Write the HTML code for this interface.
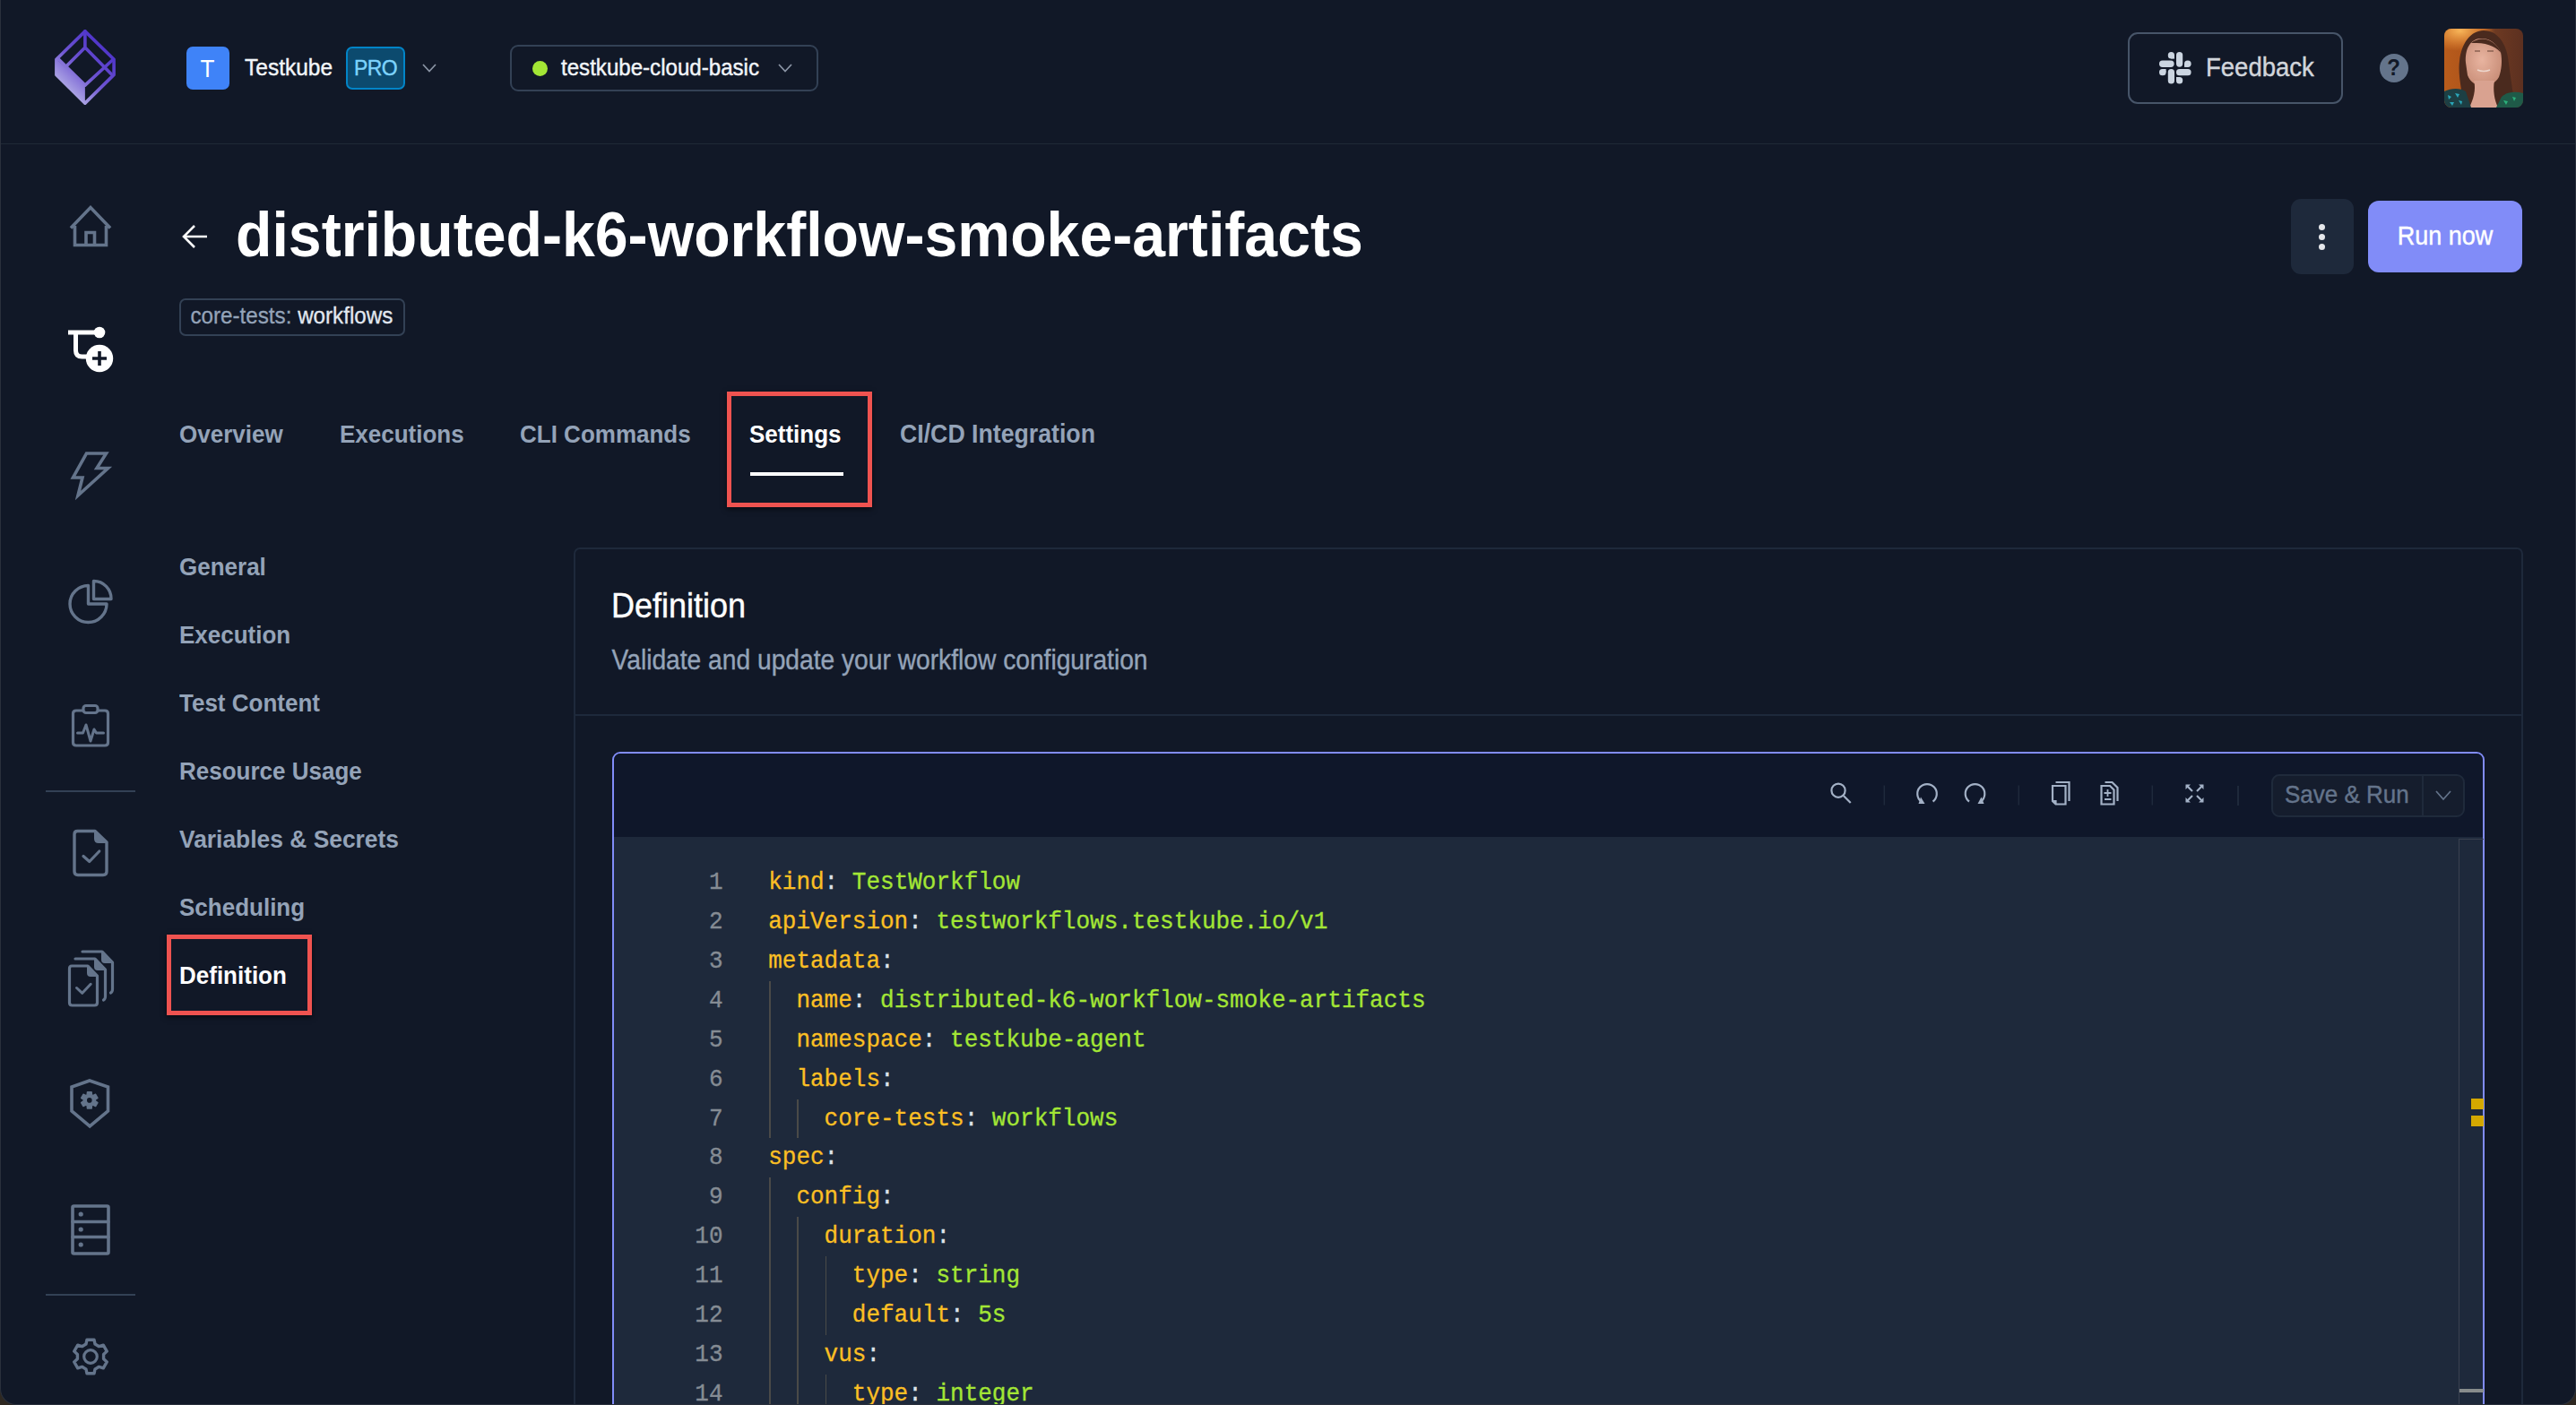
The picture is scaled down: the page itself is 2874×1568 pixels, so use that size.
<!DOCTYPE html>
<html><head><meta charset="utf-8">
<style>
html,body{margin:0;padding:0;width:2874px;height:1568px;overflow:hidden;background:#2e2821;}
*{box-sizing:border-box;}
#win{position:absolute;left:0;top:0;width:2874px;height:1568px;background:#111827;border:1px solid #2a303c;border-top:none;border-radius:0 0 18px 18px;overflow:hidden;font-family:"Liberation Sans",sans-serif;}
.a{position:absolute;white-space:nowrap;}
.t{position:absolute;white-space:nowrap;line-height:1;transform:scaleY(1.08);transform-origin:0 0.85em;}
#hdr{position:absolute;left:0;top:0;width:2874px;height:161px;border-bottom:1px solid #1f2937;}
.ln{position:absolute;left:700px;width:105.5px;text-align:right;font-family:"Liberation Mono",monospace;font-size:26px;line-height:43.9px;color:#858c94;white-space:pre;transform:scaleY(1.08);transform-origin:0 28.9px;margin-top:1px;-webkit-text-stroke:0.3px currentColor;}
.cl{position:absolute;font-family:"Liberation Mono",monospace;font-size:26px;line-height:43.9px;white-space:pre;color:#e2e8f0;transform:scaleY(1.08);transform-origin:0 28.9px;margin-top:1px;-webkit-text-stroke:0.3px currentColor;}
.k{color:#fbbf24;}.v{color:#a3e635;}.p{color:#dde3ea;}
</style></head>
<body>
<div id="win">
<div id="hdr"></div>
<!-- logo -->
<svg class="a" style="left:60px;top:33px" width="68" height="84" viewBox="0 0 68 84">
<defs><linearGradient id="lg" gradientUnits="userSpaceOnUse" x1="62" y1="18" x2="6" y2="76"><stop offset="0" stop-color="#4b30c9"/><stop offset="0.5" stop-color="#6e55d2"/><stop offset="1" stop-color="#c8c8ec"/></linearGradient></defs>
<path d="M1.9,33.2 L33.9,62.1 L33.9,84 L1.9,52 Z" fill="url(#lg)"/>
<g fill="none" stroke="url(#lg)" stroke-width="3.6" stroke-linejoin="round" stroke-linecap="round">
<path d="M33.9,1.9 L66.1,33.2 L66.1,50.4 L33.9,82.1 L1.9,50.4 L1.9,33.2 Z"/>
<path d="M33.9,1.9 L33.9,19.9 L12.9,41 M33.9,19.9 L63,49.6 M33.9,62.1 L64.5,34 M3.5,32.4 L33.9,62.1"/>
</g>
</svg>
<!-- org -->
<div class="a" style="left:207px;top:52px;width:48px;height:48px;border-radius:7px;background:#3f83f8;"></div>
<div class="t" style="left:206.5px;top:55px;width:48px;text-align:center;font-size:26px;line-height:42px;color:#fff;">T</div>
<div class="t" id="tk" style="-webkit-text-stroke:0.4px currentColor;left:272px;top:64px;font-size:24.5px;color:#f1f5f9;">Testkube</div>
<div class="a" style="left:385px;top:52px;width:66px;height:48px;border-radius:7px;background:#0c4a6e;border:2px solid #0284c7;"></div>
<div class="t" id="pro" style="-webkit-text-stroke:0.4px currentColor;left:385px;top:64.5px;width:66px;text-align:center;font-size:23px;letter-spacing:-0.6px;color:#7dd3fc;">PRO</div>
<svg class="a" style="left:469px;top:69px" width="18" height="14" viewBox="0 0 18 14"><path d="M2,3 L9,10.5 L16,3" fill="none" stroke="#8b95a5" stroke-width="1.7"/></svg>
<!-- env -->
<div class="a" style="left:568px;top:50px;width:344px;height:52px;border-radius:9px;border:2px solid #334155;"></div>
<div class="a" style="left:593px;top:68px;width:17px;height:17px;border-radius:50%;background:#a3e635;"></div>
<div class="t" id="env" style="-webkit-text-stroke:0.4px currentColor;left:625px;top:64px;font-size:24.1px;color:#f1f5f9;">testkube-cloud-basic</div>
<svg class="a" style="left:865.5px;top:69px" width="18" height="14" viewBox="0 0 18 14"><path d="M2,3 L9,10.5 L16,3" fill="none" stroke="#8b95a5" stroke-width="1.7"/></svg>
<!-- feedback -->
<div class="a" style="left:2373px;top:36px;width:240px;height:80px;border-radius:11px;border:2px solid #475569;"></div>
<svg class="a" style="left:2407.5px;top:58px" width="36" height="36" viewBox="0 0 36 36" fill="#cbd5e1">
<rect x="19" y="0" width="7.2" height="16.7" rx="3.6"/>
<rect x="9.8" y="0" width="7.2" height="7.6" rx="3.6"/><rect x="13.4" y="3.8" width="3.6" height="3.8"/>
<rect x="0" y="9.6" width="16.6" height="7.3" rx="3.6"/>
<rect x="28" y="9.6" width="7.6" height="7.3" rx="3.6"/><rect x="28" y="13.2" width="3.8" height="3.7"/>
<rect x="19" y="19" width="16.6" height="7.3" rx="3.6"/>
<rect x="0" y="19" width="7.6" height="7.3" rx="3.6"/><rect x="3.8" y="19" width="3.8" height="3.7"/>
<rect x="9.8" y="19" width="7.2" height="16.6" rx="3.6"/>
<rect x="19" y="28" width="7.2" height="7.6" rx="3.6"/><rect x="19" y="28" width="3.6" height="3.8"/>
</svg>
<div class="t" id="fb" style="-webkit-text-stroke:0.4px currentColor;left:2460px;top:62px;font-size:27.5px;color:#d1d5db;">Feedback</div>
<!-- help -->
<div class="a" style="left:2653.5px;top:59.5px;width:32px;height:32px;border-radius:50%;background:#64748b;"></div>
<div class="t" style="left:2653.5px;top:64px;width:32px;text-align:center;font-size:24px;font-weight:bold;color:#111827;">?</div>
<!-- avatar -->
<svg class="a" style="left:2725.5px;top:32px" width="88" height="88" viewBox="0 0 88 88">
<defs><clipPath id="av"><rect width="88" height="88" rx="8"/></clipPath>
<linearGradient id="avbg" x1="0" y1="0" x2="1" y2="0"><stop offset="0" stop-color="#b85c1c"/><stop offset="0.5" stop-color="#a94f1a"/><stop offset="0.62" stop-color="#6e3a22"/><stop offset="1" stop-color="#5c3020"/></linearGradient>
<radialGradient id="avhl" cx="0.2" cy="0.05" r="0.45"><stop offset="0" stop-color="#ffc060" stop-opacity="0.9"/><stop offset="1" stop-color="#ffa040" stop-opacity="0"/></radialGradient>
<radialGradient id="face" cx="0.45" cy="0.45" r="0.6"><stop offset="0" stop-color="#e8b4a0"/><stop offset="1" stop-color="#c98e78"/></radialGradient></defs>
<g clip-path="url(#av)">
<rect width="88" height="88" fill="url(#avbg)"/>
<rect width="88" height="50" fill="url(#avhl)"/>
<path d="M22,88 C20,70 15,52 17,36 C19,16 30,2 44,2 C58,2 68,14 71,32 C74,52 76,72 80,88 Z" fill="#4a2a1e"/>
<path d="M24,38 C23,24 28,12 40,11 C50,10 58,16 63,26 C65,36 64,46 61,54 C57,61 50,64 44,64 C36,64 29,60 26,52 Z" fill="url(#face)"/>
<path d="M34,25 l6,0 M48,25 l7,0" stroke="#8a6252" stroke-width="1.6"/>
<path d="M37,46 Q44,49 51,46" stroke="#ecd6cc" stroke-width="1.6" fill="none"/>
<path d="M30,16 C40,8 56,10 64,28 C60,22 50,16 36,16 Z" fill="#4a2a1e"/>
<path d="M33,58 C36,68 32,80 28,88 L60,88 C56,80 54,68 56,58 Z" fill="#d9a290"/>
<path d="M0,70 C8,66 18,66 24,70 L30,88 L0,88 Z" fill="#1d3f44"/>
<path d="M4,74 l4,2 l-3,3 Z M12,72 l5,1 l-2,4 Z M6,82 l5,0 l-2,4 Z M16,80 l4,1 l-1,4 Z" fill="#2aa6b8"/>
<path d="M58,88 L64,76 C70,70 80,70 88,72 L88,88 Z" fill="#1f5a48"/>
<path d="M66,80 l5,1 l-2,4 Z M76,76 l4,1 l-2,4 Z" fill="#2bb07a"/>
</g>
</svg>


<svg class="a" style="left:0;top:0" width="200" height="1568" viewBox="0 0 200 1568">
<g fill="none" stroke="#64748b" stroke-width="3.6" stroke-linejoin="round" stroke-linecap="round">
<!-- home -->
<path d="M78,254.5 L100,231.5 L122,254.5 M82.5,252 L82.5,273.5 L117.5,273.5 L117.5,252 M95,273.5 L95,259.5 L104.5,259.5 L104.5,273.5" stroke-linejoin="miter" stroke-linecap="butt"/>
<!-- bolt -->
<path d="M95.5,506 L117.5,506 L107,522.5 L119.5,522.5 L86,553 L91,533 L80.5,533 Z" stroke-linejoin="miter"/>
<!-- pie -->
<path d="M97.5,653.5 A20.5,20.5 0 1 0 118,674 L97.5,674 Z" stroke-width="3.4"/>
<path d="M103.5,648.5 L103.5,668.5 L123,668.5 A19.5,19.5 0 0 0 103.5,648.5 Z" stroke-width="3.4"/>
<!-- clipboard -->
<path d="M91.5,793 L84,793 Q80.5,793 80.5,796.5 L80.5,828.5 Q80.5,832 84,832 L116,832 Q119.5,832 119.5,828.5 L119.5,796.5 Q119.5,793 116,793 L108.5,793" stroke-width="3.2"/>
<rect x="92" y="787.5" width="16" height="8" rx="3" stroke-width="3.2"/>
<path d="M85.5,818 L91.5,818 L95,809 L100,827 L104,814 L106.5,818 L114.5,818" stroke-width="3"/>
<!-- file check -->
<path d="M105,927.5 L85.5,927.5 Q82,927.5 82,931 L82,972.5 Q82,976.5 86,976.5 L114,976.5 Q118,976.5 118,972.5 L118,940 Z" stroke-width="3.4"/>
<path d="M105,927.5 L118,940 L109,940 Q105,940 105,936 Z" fill="#64748b" stroke-width="2"/>
<path d="M92,955.5 L98.8,961.5 L109.8,950" stroke-width="3.2"/>
<!-- files -->
<path d="M97,1078 L79,1078 Q76.5,1078 76.5,1081 L76.5,1119 Q76.5,1122 79.5,1122 L104.5,1122 Q107.5,1122 107.5,1119 L107.5,1089 Z" stroke-width="3.2"/>
<path d="M97,1078 L107.5,1089 L100,1089 Q97,1089 97,1086 Z" fill="#64748b" stroke-width="2"/>
<path d="M84.5,1102.5 L90.8,1108.3 L100.2,1098.3" stroke-width="3"/>
<path d="M83,1070 L105,1070 L116.5,1082 L116.5,1112 Q116.5,1115 114.5,1116" stroke-width="3.2"/>
<path d="M105,1070 L116.5,1082 L108,1082 Q105,1082 105,1079 Z" fill="#64748b" stroke-width="2"/>
<path d="M91,1062 L113,1062 L124.5,1074 L124.5,1104 Q124.5,1107 122.5,1108" stroke-width="3.2"/>
<path d="M113,1062 L124.5,1074 L116,1074 Q113,1074 113,1071 Z" fill="#64748b" stroke-width="2"/>
<!-- shield -->
<path d="M99,1206 L119.5,1213 L119.5,1240 L99.2,1257 L79,1240 L79,1213 Z" stroke-width="3.6" stroke-linejoin="miter"/>
<path d="M96.16,1221.96 L96.50,1218.68 L101.10,1218.68 L101.44,1221.96 L102.62,1222.64 L105.63,1221.30 L107.93,1225.28 L105.26,1227.22 L105.26,1228.58 L107.93,1230.52 L105.63,1234.50 L102.62,1233.16 L101.44,1233.84 L101.10,1237.12 L96.50,1237.12 L96.16,1233.84 L94.98,1233.16 L91.97,1234.50 L89.67,1230.52 L92.34,1228.58 L92.34,1227.22 L89.67,1225.28 L91.97,1221.30 L94.98,1222.64 Z" fill="#64748b" stroke-width="1.5"/>
<circle cx="98.8" cy="1227.9" r="2.8" fill="#111827" stroke="none"/>
<!-- server -->
<rect x="80" y="1346" width="40" height="53" rx="1.5" stroke-width="3.6"/>
<path d="M80,1363.5 L120,1363.5 M80,1380.5 L120,1380.5" stroke-width="3.4"/>
<!-- gear -->
<path d="M94.94,1500.09 L96.01,1495.22 L103.99,1495.22 L105.06,1500.09 L109.51,1502.66 L114.27,1501.15 L118.26,1508.07 L114.58,1511.43 L114.58,1516.57 L118.26,1519.93 L114.27,1526.85 L109.51,1525.34 L105.06,1527.91 L103.99,1532.78 L96.01,1532.78 L94.94,1527.91 L90.49,1525.34 L85.73,1526.85 L81.74,1519.93 L85.42,1516.57 L85.42,1511.43 L81.74,1508.07 L85.73,1501.15 L90.49,1502.66 Z" stroke-width="3.4"/>
<circle cx="100" cy="1514" r="7.3" stroke-width="3.2"/>
</g>
<g fill="#64748b">
<circle cx="89.2" cy="1355" r="2.6"/><circle cx="89.2" cy="1372" r="2.6"/><circle cx="89.2" cy="1389" r="2.6"/>
</g>
<rect x="50" y="882" width="100" height="2" fill="#334155"/>
<rect x="50" y="1444" width="100" height="2" fill="#334155"/>
<!-- workflow active -->
<g fill="none" stroke="#fff" stroke-width="5">
<path d="M75,371 L109,371 M83.5,371 L83.5,391 Q83.5,398 90.5,398 L98,398"/>
</g>
<circle cx="110" cy="371" r="6.3" fill="#fff"/>
<circle cx="110" cy="400" r="15.2" fill="#fff"/>
<path d="M102,400 L118,400 M110,392 L110,408" stroke="#111827" stroke-width="3.6"/>
</svg>

<!-- back arrow -->
<svg class="a" style="left:200px;top:248px" width="34" height="32" viewBox="0 0 34 32"><path d="M30,16 L4.5,16 M16,4 L4,16 L16,28" fill="none" stroke="#fff" stroke-width="2.6" stroke-linejoin="miter"/></svg>
<div class="t" id="title" style="left:262px;top:230px;font-size:66.2px;font-weight:bold;color:#fff;transform:scaleY(1.06);">distributed-k6-workflow-smoke-artifacts</div>
<!-- tag -->
<div class="a" style="left:199px;top:333px;width:252px;height:42px;border-radius:7px;border:2px solid #334155;"></div>
<div class="t" id="tag" style="-webkit-text-stroke:0.3px currentColor;left:211.5px;top:341px;font-size:24.2px;color:#94a3b8;">core-tests: <span style="color:#e2e8f0;-webkit-text-stroke:0.3px #e2e8f0;">workflows</span></div>
<!-- dots + run -->
<div class="a" style="left:2555px;top:222px;width:70px;height:84px;border-radius:11px;background:#1e293b;"></div>
<div class="a" style="left:2586px;top:249.5px;width:7px;height:7px;border-radius:50%;background:#e5e7eb;"></div>
<div class="a" style="left:2586px;top:260.5px;width:7px;height:7px;border-radius:50%;background:#e5e7eb;"></div>
<div class="a" style="left:2586px;top:271.5px;width:7px;height:7px;border-radius:50%;background:#e5e7eb;"></div>
<div class="a" style="left:2641px;top:224px;width:172px;height:80px;border-radius:12px;background:#818cf8;"></div>
<div class="t" id="run" style="-webkit-text-stroke:0.4px currentColor;left:2641px;top:251px;width:172px;text-align:center;font-size:27px;color:#fff;">Run now</div>
<!-- tabs -->
<div class="t tab" style="left:199px;top:472px;font-size:26px;font-weight:bold;color:#94a3b8;">Overview</div>
<div class="t tab" style="left:378px;top:472px;font-size:26px;font-weight:bold;color:#94a3b8;">Executions</div>
<div class="t tab" style="left:579px;top:472px;font-size:26px;font-weight:bold;color:#94a3b8;">CLI Commands</div>
<div class="t tab" style="left:835px;top:472px;font-size:26px;font-weight:bold;color:#fff;">Settings</div>
<div class="t tab" style="left:1003px;top:472px;font-size:26.7px;font-weight:bold;color:#94a3b8;">CI/CD Integration</div>
<div class="a" style="left:836px;top:527px;width:104px;height:4px;background:#fff;"></div>
<div class="a" style="left:810px;top:437px;width:162px;height:129px;border:5px solid #ef5350;box-shadow:0 2px 6px rgba(0,0,0,0.6);"></div>
<!-- settings nav -->
<div class="t nav" style="left:199px;top:620px;font-size:26px;font-weight:bold;color:#94a3b8;">General</div>
<div class="t nav" style="left:199px;top:696px;font-size:26px;font-weight:bold;color:#94a3b8;">Execution</div>
<div class="t nav" style="left:199px;top:772px;font-size:26px;font-weight:bold;color:#94a3b8;">Test Content</div>
<div class="t nav" style="left:199px;top:848px;font-size:26px;font-weight:bold;color:#94a3b8;">Resource Usage</div>
<div class="t nav" style="left:199px;top:924px;font-size:26.4px;font-weight:bold;color:#94a3b8;">Variables &amp; Secrets</div>
<div class="t nav" style="left:199px;top:1000px;font-size:26px;font-weight:bold;color:#94a3b8;">Scheduling</div>
<div class="t nav" style="left:199px;top:1076px;font-size:26px;font-weight:bold;color:#fff;">Definition</div>
<div class="a" style="left:185px;top:1043px;width:162px;height:90px;border:5px solid #ef5350;box-shadow:0 2px 6px rgba(0,0,0,0.6);"></div>
<!-- card -->
<div class="a" id="card" style="left:639px;top:611px;width:2175px;height:1000px;border-radius:7px;border:2px solid #1e293b;"></div>
<div class="a" style="left:641px;top:797px;width:2172px;height:2px;background:#1e293b;"></div>
<div class="t" id="defh" style="-webkit-text-stroke:0.4px currentColor;left:681px;top:659px;font-size:36px;color:#fff;">Definition</div>
<div class="t" id="defs" style="-webkit-text-stroke:0.35px currentColor;left:681.5px;top:723px;font-size:28.2px;color:#94a3b8;">Validate and update your workflow configuration</div>

<!-- editor -->
<div class="a" style="left:682px;top:839px;width:2089px;height:760px;border-radius:9px;border:2px solid #818cf8;background:#1e293b;overflow:hidden;">
<div class="a" style="left:0;top:0;width:2085px;height:93px;background:#0f172a;"></div>
</div>
<div class="a" style="left:2742px;top:936px;width:28px;height:700px;border-left:1.5px solid #3a4150;border-top:1.5px solid #3a4150;"></div>
<div class="a" style="left:2756px;top:1226px;width:14px;height:12px;background:#d4a800;"></div>
<div class="a" style="left:2756px;top:1245px;width:14px;height:12px;background:#d4a800;"></div>
<div class="a" style="left:2743px;top:1550px;width:27px;height:4px;background:#878c8c;"></div>
<div class="ln" style="top:963.12px">1</div>
<div class="cl" style="top:963.12px;left:856.20px"><span class="k">kind</span><span class="p">:</span> <span class="v">TestWorkflow</span></div>
<div class="ln" style="top:1007.02px">2</div>
<div class="cl" style="top:1007.02px;left:856.20px"><span class="k">apiVersion</span><span class="p">:</span> <span class="v">testworkflows.testkube.io/v1</span></div>
<div class="ln" style="top:1050.92px">3</div>
<div class="cl" style="top:1050.92px;left:856.20px"><span class="k">metadata</span><span class="p">:</span></div>
<div class="ln" style="top:1094.82px">4</div>
<div class="cl" style="top:1094.82px;left:887.40px"><span class="k">name</span><span class="p">:</span> <span class="v">distributed-k6-workflow-smoke-artifacts</span></div>
<div class="ln" style="top:1138.72px">5</div>
<div class="cl" style="top:1138.72px;left:887.40px"><span class="k">namespace</span><span class="p">:</span> <span class="v">testkube-agent</span></div>
<div class="ln" style="top:1182.62px">6</div>
<div class="cl" style="top:1182.62px;left:887.40px"><span class="k">labels</span><span class="p">:</span></div>
<div class="ln" style="top:1226.52px">7</div>
<div class="cl" style="top:1226.52px;left:918.60px"><span class="k">core-tests</span><span class="p">:</span> <span class="v">workflows</span></div>
<div class="ln" style="top:1270.42px">8</div>
<div class="cl" style="top:1270.42px;left:856.20px"><span class="k">spec</span><span class="p">:</span></div>
<div class="ln" style="top:1314.32px">9</div>
<div class="cl" style="top:1314.32px;left:887.40px"><span class="k">config</span><span class="p">:</span></div>
<div class="ln" style="top:1358.22px">10</div>
<div class="cl" style="top:1358.22px;left:918.60px"><span class="k">duration</span><span class="p">:</span></div>
<div class="ln" style="top:1402.12px">11</div>
<div class="cl" style="top:1402.12px;left:949.80px"><span class="k">type</span><span class="p">:</span> <span class="v">string</span></div>
<div class="ln" style="top:1446.02px">12</div>
<div class="cl" style="top:1446.02px;left:949.80px"><span class="k">default</span><span class="p">:</span> <span class="v">5s</span></div>
<div class="ln" style="top:1489.92px">13</div>
<div class="cl" style="top:1489.92px;left:918.60px"><span class="k">vus</span><span class="p">:</span></div>
<div class="ln" style="top:1533.82px">14</div>
<div class="cl" style="top:1533.82px;left:949.80px"><span class="k">type</span><span class="p">:</span> <span class="v">integer</span></div>
<div class="a" style="left:857.20px;top:1094.82px;width:1.5px;height:175.60px;background:#4a4a48;"></div>
<div class="a" style="left:888.40px;top:1226.52px;width:1.5px;height:43.90px;background:#4a4a48;"></div>
<div class="a" style="left:857.20px;top:1314.32px;width:1.5px;height:263.40px;background:#4a4a48;"></div>
<div class="a" style="left:888.40px;top:1358.22px;width:1.5px;height:219.50px;background:#4a4a48;"></div>
<div class="a" style="left:919.60px;top:1402.12px;width:1.5px;height:87.80px;background:#4a4a48;"></div>
<div class="a" style="left:919.60px;top:1533.82px;width:1.5px;height:43.90px;background:#4a4a48;"></div>
<!-- toolbar -->
<svg class="a" style="left:2030px;top:860px" width="440" height="50" viewBox="2030 860 440 50">
<g fill="none" stroke="#a3b1c6" stroke-width="2.2" stroke-linecap="butt">
<circle cx="2050" cy="882.2" r="7.6"/>
<path d="M2055.7,888 L2063.7,896"/>
<path d="M2142.5,894.5 A10.8,10.8 0 1 1 2155.5,894.5"/>
<path d="M2196,894.5 A10.8,10.8 0 1 1 2209,894.5"/>
<path d="M2289,877 L2303.5,877 L2303.5,897.5 L2292.5,897.5 L2289,894 Z M2289,894 L2292.5,894 L2292.5,897.5"/>
<path d="M2292.5,873 L2307.5,873 L2307.5,894"/>
<path d="M2343.5,877 L2353,877 L2357.5,881.5 L2357.5,897.5 L2343.5,897.5 Z"/>
<path d="M2347.5,873 L2355.5,873 L2361.5,879 L2361.5,894"/>
<path d="M2350.5,881 L2350.5,889 M2346.5,885 L2354.5,885 M2347,892 L2354.5,892" stroke-width="1.8"/>
<path d="M2438.5,876.5 L2445,883 M2456.5,876.5 L2450,883 M2438.5,894.5 L2445,888 M2456.5,894.5 L2450,888"/>
</g>
<g fill="#a3b1c6">
<path d="M2139.5,897 L2146.5,897 L2142,889.5 Z"/>
<path d="M2205.5,897 L2212.5,897 L2209.5,889.5 Z"/>
<path d="M2437.5,875.5 L2443,875.5 L2437.5,881 Z M2457.5,875.5 L2452,875.5 L2457.5,881 Z M2437.5,895.5 L2443,895.5 L2437.5,890 Z M2457.5,895.5 L2452,895.5 L2457.5,890 Z"/>
</g>
<g fill="#1e293b">
<rect x="2100.5" y="876.5" width="1.5" height="22"/>
<rect x="2250.5" y="876.5" width="1.5" height="22"/>
<rect x="2399.5" y="876.5" width="1.5" height="22"/>
</g>
</svg>
<div class="a" style="left:2495px;top:876.5px;width:1.5px;height:22px;background:#1e293b;"></div>
<div class="a" style="left:2533px;top:864px;width:216px;height:48px;border-radius:9px;border:2px solid #1f2a3b;background:#151d2d;"></div>
<div class="a" style="left:2701px;top:865px;width:2px;height:46px;background:#1f2a3b;"></div>
<div class="t" id="sar" style="-webkit-text-stroke:0.4px currentColor;left:2548px;top:874px;font-size:26px;color:#64748b;">Save &amp; Run</div>
<svg class="a" style="left:2715px;top:880px" width="20" height="16" viewBox="0 0 20 16"><path d="M2,3 L10,12 L18,3" fill="none" stroke="#64748b" stroke-width="1.7"/></svg>
</div>
</body></html>
